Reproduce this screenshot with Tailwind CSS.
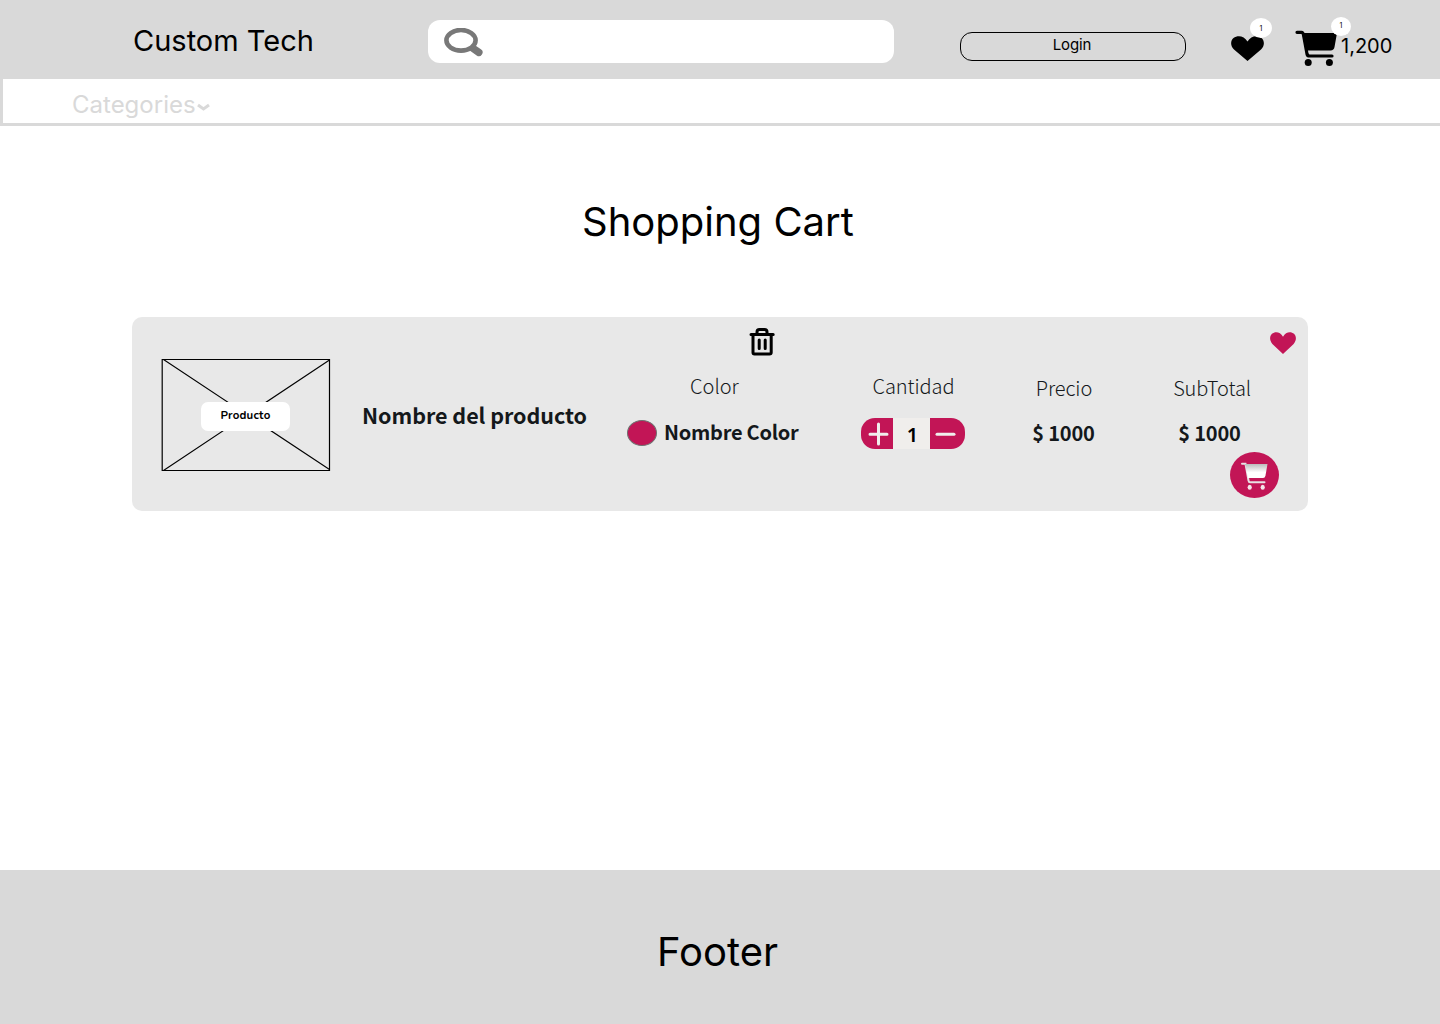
<!DOCTYPE html>
<html lang="es">
<head>
<meta charset="utf-8">
<title>Shopping Cart</title>
<script src="https://cdn.jsdelivr.net/npm/@tailwindcss/browser@4"></script>
</head>
<body class="bg-white text-black font-['Inter',sans-serif]">
<div class="flex h-[1024px] w-[1440px] flex-col overflow-hidden whitespace-nowrap">
  <header class="flex h-[79px] shrink-0 items-start bg-[#d9d9d9]">
    <div class="ml-[133px] mt-[23px] w-[295px] text-[29px] leading-[36px]">Custom Tech</div>
    <div class="mt-5 h-[43px] w-[466px] rounded-[12px] bg-white pl-4 pt-2">
      <svg class="h-[29px] w-[39px]" viewBox="0 0 39 29" fill="none" stroke="#787878"><path d="M28.500 20L34.800 24.300" stroke-width="7.500" stroke-linecap="round"/><ellipse cx="17" cy="12.300" rx="14.600" ry="10.300" fill="#fff" stroke-width="4.600"/></svg>
    </div>
    <button class="ml-[66px] mt-8 h-[29px] w-[226px] rounded-[12px] border border-black pb-[3px] pr-[2px] text-[15px] leading-[20px] tracking-[-0.1px]">Login</button>
    <div class="relative ml-[45px] mt-9 w-[33px]">
      <svg class="h-[25px] w-[33px]" viewBox="0 0 33 25"><path d="M16.500 25L3 13.500C-1 9.500-.5 4.500 2.500 2C6.500-1 13-.5 16.500 5.500C20-.5 26.500-1 30.500 2C33.500 4.500 34 9.500 30 13.500Z"/></svg>
      <span class="absolute -top-[18px] left-[19px] h-5 w-[22px] rounded-[50%] bg-white text-center text-[7px] leading-[21px]">1</span>
    </div>
    <div class="relative ml-[31px] mt-[30px] w-[43px]">
      <svg class="h-9 w-[43px]" viewBox="0 0 43 36"><path d="M2 2.300H6.500Q8 2.300 8.500 5L12 24Q12.500 26 14.500 26H37" fill="none" stroke="#000" stroke-width="3.200" stroke-linecap="round" stroke-linejoin="round"/><path d="M7 3H42L39.500 17Q39 20.400 35.500 20.400H11Z"/><circle cx="13.200" cy="32.500" r="3.500"/><circle cx="34.400" cy="32.500" r="3.500"/></svg>
      <span class="absolute -top-[13px] left-9 h-[19px] w-5 rounded-[50%] bg-white text-center text-[7px] leading-[18px]">1</span>
    </div>
    <div class="ml-[3px] mt-[34px] text-[20px] leading-6">1,200</div>
  </header>
  <nav class="flex h-[47px] shrink-0 items-start border-b-[3px] border-l-[3px] border-[#d9d9d9] pl-[69px] text-[#d9d9d9]">
    <div class="mt-[11px] text-[24px] leading-[30px]">Categories</div>
    <svg class="ml-[1px] mt-[24px] h-[9px] w-[13px]" viewBox="0 0 13 9" fill="none" stroke="currentColor" stroke-width="3"><path d="M1 2L6.500 6L12 2"/></svg>
  </nav>
  <main class="h-[744px] shrink-0">
    <h1 class="ml-[582px] mt-[70px] text-[40px] leading-[52px]">Shopping Cart</h1>
    <section class="ml-[132px] mt-[69px] flex h-[194px] w-[1176px] rounded-[10px] bg-[#e8e8e8] font-['Noto_Sans_CJK_JP',sans-serif]">
      <div class="ml-[29px] mt-[41px] grid h-[113px] w-[170px] place-items-center">
        <svg class="col-start-1 row-start-1 h-[113px] w-[170px]" viewBox="0 0 170 113" fill="none" stroke="#000"><path d="M1.200 1.500H168.500V112.500H1.200Z" stroke-width="1.200"/><path d="M2.500 1.500L168.500 111.500M168.500 2L2.500 112.500" stroke-width="1.100"/></svg>
        <span class="col-start-1 row-start-1 mr-[1px] mt-[3px] h-[29px] w-[89px] rounded-[7px] bg-white text-center font-['Nunito','Noto_Sans',sans-serif] text-[11.500px] leading-[27px] font-bold tracking-[0.2px]">Producto</span>
      </div>
      <h2 class="ml-[31px] mt-[82px] w-[265px] text-[21.500px] leading-[32px] font-bold tracking-[-0.04px] text-[#14181b]">Nombre del producto</h2>
      <div class="flex w-[681px] flex-col">
        <div class="flex h-[52px] items-start justify-between pl-[121px] pr-3">
          <svg class="mt-[10px] h-[29px] w-[27px]" viewBox="0 0 27 29" fill="none" stroke="#000" stroke-width="3" stroke-linecap="round" stroke-linejoin="round"><path d="M3 7.500H25.200M5 7.500V25.500Q5 27 6.500 27H21.500Q23.200 27 23.200 25.500V7.500M9 7V5Q9 2.500 11.500 2.500H16.500Q19 2.500 19 5V7M11.200 13V21.500M17.200 13V21.500"/></svg>
          <svg class="mt-[15px] h-[22px] w-[26px]" viewBox="0 0 33 25" preserveAspectRatio="none" fill="#c21556"><path d="M16.500 25L3 13.500C-1 9.500-.5 4.500 2.500 2C6.500-1 13-.5 16.500 5.500C20-.5 26.500-1 30.500 2C33.500 4.500 34 9.500 30 13.500Z"/></svg>
        </div>
        <div class="flex h-[83px] items-start text-[20px] leading-[30px] text-[#14181b]">
          <div class="w-[234px]">
            <div class="ml-[63px] mt-[2px] font-light">Color</div>
            <div class="mt-4 flex items-center font-bold tracking-[-0.25px]"><span class="mr-[7px] mt-[2px] h-[26px] w-[30px] rounded-[50%] border border-[#707070] bg-[#c21556]"></span>Nombre Color</div>
          </div>
          <div class="w-[104px]">
            <div class="ml-[1px] mt-[2px] text-center font-light tracking-[-0.1px]">Cantidad</div>
            <div class="mt-[17px] flex h-[31px] overflow-hidden rounded-[14px] bg-[#c21556] text-black">
              <svg class="h-[31px] w-[32px]" viewBox="0 0 32 31" stroke="#f0eeec" stroke-width="3" stroke-linecap="round"><path d="M9 16.300H26M17.500 6V26"/></svg>
              <span class="w-[37px] bg-[#f0eeec] pl-[2px] text-center font-['Noto_Sans',sans-serif] text-[20px] leading-[33px] font-semibold">1</span>
              <svg class="h-[31px] w-[35px]" viewBox="0 0 35 31" stroke="#f0eeec" stroke-width="3" stroke-linecap="round"><path d="M7 16.300H24"/></svg>
            </div>
          </div>
          <div class="ml-[67px] w-[64px] text-center">
            <div class="mt-1 font-light tracking-[-0.1px]">Precio</div>
            <div class="mr-[1px] mt-[15px] font-bold tracking-[-0.2px]">$ 1000</div>
          </div>
          <div class="ml-[76px] w-[80px] text-center">
            <div class="mt-1 font-light tracking-[-0.15px]">SubTotal</div>
            <div class="mr-[5px] mt-[15px] font-bold tracking-[-0.2px]">$ 1000</div>
          </div>
        </div>
        <button class="ml-[603px] grid h-[46px] w-[49px] shrink-0 place-items-center rounded-[50%] bg-[#c21556]">
          <svg class="mt-[2px] h-[28px] w-[27px]" viewBox="0 0 27 28"><defs><linearGradient id="basket" x1="0" y1="0" x2="0" y2="1"><stop offset="0" stop-color="#bbb"/><stop offset=".6" stop-color="#fff"/></linearGradient></defs><path d="M1 1.800H4.500L7.500 18.500Q7.800 20.300 9 20.300H23.500" fill="none" stroke="#e8e0e4" stroke-width="2" stroke-linecap="round"/><path d="M4 2H26.500L24.500 13.500Q24 16 22 16H7Z" fill="url(#basket)"/><ellipse cx="8.700" cy="25.300" rx="2.100" ry="2.500" fill="#f4e4ea"/><ellipse cx="21.700" cy="25.300" rx="2.100" ry="2.500" fill="#f4e4ea"/></svg>
        </button>
      </div>
    </section>
  </main>
  <footer class="h-[154px] shrink-0 bg-[#d9d9d9] pl-[657px] pt-[56px] text-[40px] leading-[52px]">Footer</footer>
</div>
</body>
</html>
